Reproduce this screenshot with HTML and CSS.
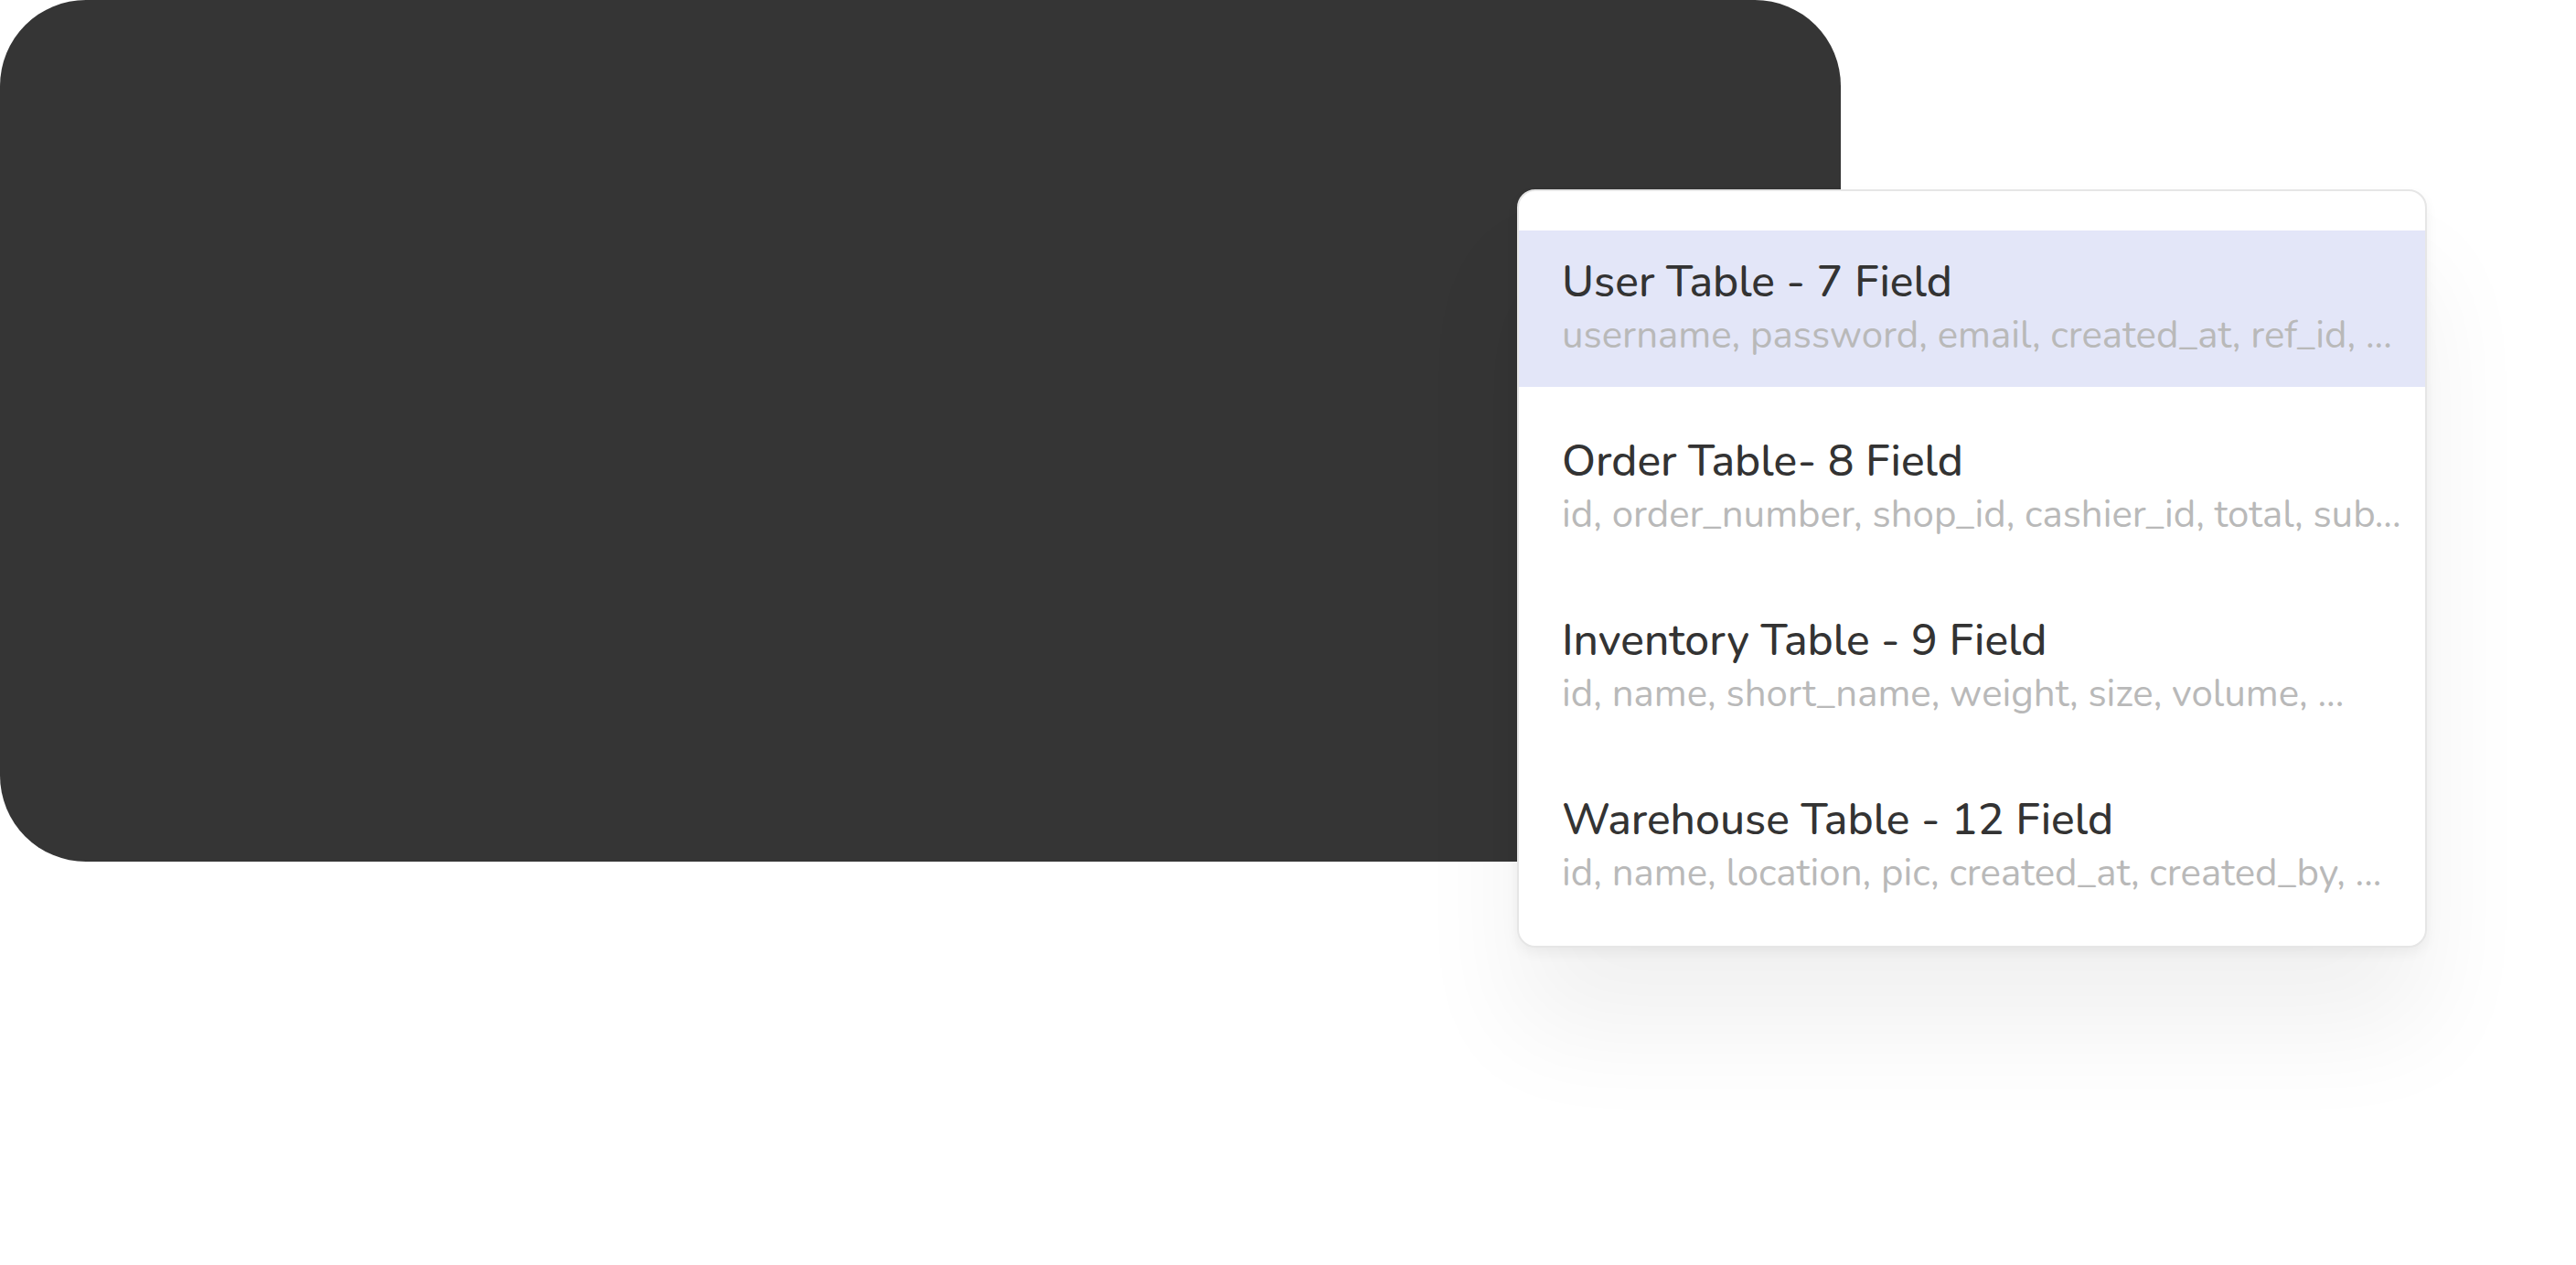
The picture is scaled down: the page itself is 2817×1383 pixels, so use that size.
FILE: index.html
```html
<!DOCTYPE html>
<html lang="en">
<head>
    <meta charset="UTF-8">
    <meta name="viewport" content="width=device-width, initial-scale=1.0">
    <title>Table Picker</title>
    <link rel="stylesheet" href="styles.css">
</head>
<body>
    <div class="stage">
        <div class="backdrop"></div>

        <ul class="table-menu">
            <li class="table-item active">
                <div class="table-name">User Table - 7 Field</div>
                <div class="table-fields">username, password, email, created_at, ref_id, ...</div>
            </li>
            <li class="table-item">
                <div class="table-name">Order Table- 8 Field</div>
                <div class="table-fields">id, order_number, shop_id, cashier_id, total, sub...</div>
            </li>
            <li class="table-item">
                <div class="table-name">Inventory Table - 9 Field</div>
                <div class="table-fields">id, name, short_name, weight, size, volume, ...</div>
            </li>
            <li class="table-item">
                <div class="table-name">Warehouse Table - 12 Field</div>
                <div class="table-fields">id, name, location, pic, created_at, created_by, ...</div>
            </li>
        </ul>
    </div>
</body>
</html>
```

FILE: styles.css
```css
body {
    margin: 0;
    background-color: #fff;
    font-family: "Nunito", Lato, "Open Sans", sans-serif;
}
.stage {
    position: relative;
    width: 2817px;
    height: 1383px;
    overflow: hidden;
}
.backdrop {
    width: 2013px;
    height: 942px;
    background-color: #353535;
    border-radius: 94px;
}
.table-menu {
    position: absolute;
    left: 1659px;
    top: 207px;
    width: 995px;
    box-sizing: border-box;
    margin: 0;
    padding: 43px 0 23px;
    list-style: none;
    background-color: #fff;
    border: 2px solid #e6e6e6;
    border-radius: 20px;
    box-shadow: 0 6px 14px rgba(0, 0, 0, 0.05), 0 90px 120px rgba(0, 0, 0, 0.06);
    display: flex;
    flex-direction: column;
    gap: 25px;
}
.table-item {
    height: 171px;
    box-sizing: border-box;
    padding: 28px 20px 0 47px;
    cursor: pointer;
}
.table-item.active {
    background-color: #e3e6f8;
}
.table-name {
    font-size: 48px;
    font-weight: 500;
    line-height: 56px;
    color: #333;
    white-space: nowrap;
}
.table-fields {
    margin-top: 7px;
    font-size: 42px;
    line-height: 48px;
    color: #b9b9b9;
    white-space: nowrap;
}
```
